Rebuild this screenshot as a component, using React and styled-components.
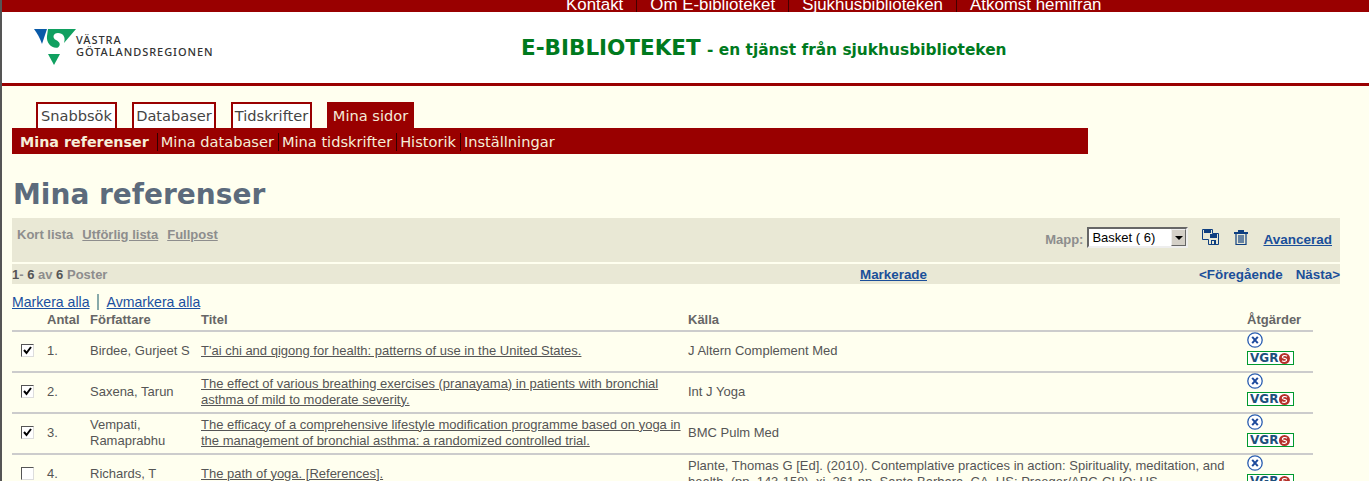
import React from "react";
import styled, { createGlobalStyle } from "styled-components";

const Global = createGlobalStyle`
  html, body { margin: 0; padding: 0; height: 481px; overflow: hidden; background: #ffffef; }
  body { font-family: "Liberation Sans", Arial, sans-serif; font-size: 13px; color: #555; }
`;

const Page = styled.div`
  border-left: 2px solid #555;
  height: 481px;
  overflow: hidden;
  box-sizing: border-box;
`;

const TopBar = styled.div`
  height: 12px;
  background: #990000;
  display: flex;
  justify-content: flex-start;
  align-items: flex-end;
  overflow: hidden;
  padding-left: 551px;
`;
const TopLink = styled.a`
  color: #fff;
  font-size: 16.9px;
  line-height: 16px;
  padding: 0 13px;
  margin-bottom: -1px;
  border-left: 1px solid #400;
  white-space: nowrap;
  &:first-child { border-left: 0; }
`;

const Header = styled.header`
  background: #fff;
  height: 71px;
  border-bottom: 3px solid #990000;
  display: flex;
  position: relative;
`;
const LogoWrap = styled.div`
  width: 519px;
  padding: 17px 0 0 31px;
  box-sizing: border-box;
  display: flex;
  align-items: flex-start;
`;
const LogoText = styled.div`
  font-family: "Noto Sans", sans-serif;
  font-size: 11px;
  line-height: 12px;
  font-weight: 500;
  color: #333;
  margin: 5px 0 0 0;
  letter-spacing: 0.95px;
  white-space: nowrap;
`;
const SiteTitle = styled.div`
  font-family: "DejaVu Sans", Verdana, sans-serif;
  color: #007a1e;
  font-size: 15.4px;
  font-weight: 700;
  padding-top: 23px;
  white-space: nowrap;
  b { font-size: 21.5px; margin-right: 1px; }
`;

const Main = styled.main`
  padding: 16px 0 0 10px;
`;
const Tabs = styled.div`
  display: flex;
  gap: 15px;
  padding-left: 24px;
  height: 26px;
`;
const Tab = styled.a`
  font-family: "DejaVu Sans", Verdana, sans-serif;
  font-size: 14.6px;
  line-height: 24px;
  box-sizing: border-box;
  width: ${p => p.$w}px;
  height: 26px;
  text-align: center;
  white-space: nowrap;
  border: 2px solid #990000;
  border-bottom: 0;
  background: ${p => (p.$active ? "#990000" : "#fff")};
  color: ${p => (p.$active ? "#f4ead8" : "#444")};
`;
const SubNav = styled.nav`
  width: 1076px;
  height: 26px;
  background: #990000;
  display: flex;
  align-items: center;
`;
const SubLink = styled.a`
  font-family: "DejaVu Sans", Verdana, sans-serif;
  font-size: 14.6px;
  color: #f6efd9;
  line-height: 18px;
  margin-top: 1px;
  padding: 0 4px 0 3px;
  border-left: 1px solid #300;
  white-space: nowrap;
  &:first-child { border-left: 0; padding: 0 8px; font-weight: 700; font-size: 14.3px; }
`;

const Title = styled.h1`
  font-family: "DejaVu Sans", Verdana, sans-serif;
  font-size: 28px;
  line-height: 32px;
  font-weight: 700;
  color: #5c6b7c;
  margin: 25px 0 7px 1px;
`;

const Toolbar = styled.div`
  width: 1328px;
  height: 44px;
  background: #e9e8d5;
  box-sizing: border-box;
  padding: 9px 8px 0 5px;
  display: flex;
  justify-content: space-between;
  font-weight: 700;
  color: #8d8d8d;
`;
const ViewLinks = styled.div`
  display: flex;
  gap: 9px;
  line-height: 15px;
  a { text-decoration: underline; }
`;
const Tools = styled.div`
  display: flex;
  align-items: flex-start;
`;
const MappLabel = styled.span`
  margin: 5px 4px 0 0;
`;
const FakeSelect = styled.div`
  width: 101px;
  height: 21px;
  box-sizing: border-box;
  border: 2px solid;
  border-color: #666 #eee #eee #666;
  background: #fff;
  font-weight: 400;
  font-size: 13px;
  color: #000;
  padding: 1px 0 0 3px;
  position: relative;
  margin-right: 14px;
`;
const SelectArrow = styled.i`
  position: absolute;
  right: 0;
  top: 0;
  width: 15px;
  height: 17px;
  background: #d4d0c8;
  box-sizing: border-box;
  border: 1px solid #666;
  border-top-color: #eee;
  border-left-color: #eee;
  &::after {
    content: "";
    position: absolute;
    left: 3px;
    top: 6px;
    border: 4px solid transparent;
    border-top: 4px solid #000;
    border-bottom: 0;
  }
`;
const ToolIcon = styled.svg`
  width: ${p => p.$w}px;
  height: 16px;
  margin: 2px ${p => p.$gap}px 0 0;
  flex: none;
`;
const AdvLink = styled.a`
  color: #1b4f99;
  text-decoration: underline;
  font-size: 13.5px;
  margin-top: 5px;
`;

const PageRow = styled.div`
  width: 1328px;
  height: 20px;
  margin-top: 2px;
  background: #e9e8d5;
  display: grid;
  grid-template-columns: 848px 1fr auto;
  align-items: center;
  font-weight: 700;
  color: #8d8d8d;
`;
const BlueBold = styled.a`
  color: #1b4f99;
  font-size: 13.4px;
  text-decoration: ${p => (p.$line ? "underline" : "none")};
  margin-left: ${p => p.$ml || 0}px;
`;
const Dark = styled.span`
  color: #555;
`;

const SelectRow = styled.div`
  margin-top: 10px;
  height: 16px;
  font-size: 14.1px;
  line-height: 16px;
  display: flex;
  a { color: #1a4fa0; text-decoration: underline; }
  i { width: 2px; background: #8aa; margin: 0 8px 0 7px; height: 16px; }
`;

const Table = styled.table`
  width: 1301px;
  border-collapse: collapse;
  table-layout: fixed;
  margin-top: 1px;
  color: #555;
  th {
    text-align: left;
    font-size: 13px;
    height: 20px;
    padding: 0 0 3px 0;
    box-sizing: border-box;
    color: #666;
    border-bottom: 2px solid #ccc;
  }
  td {
    padding: 0 0 2px 0;
    box-sizing: border-box;
    height: 41px;
    line-height: 16px;
    vertical-align: middle;
    border-bottom: 2px solid #ccc;
  }
`;
const Check = styled.span`
  display: block;
  width: 11px;
  height: 11px;
  margin-left: 9px;
  border: 1px solid;
  border-color: #555 #ddd #ddd #555;
  background: #fff;
  color: #000;
  svg { display: block; }
`;
const TitleLink = styled.a`
  color: #555;
  text-decoration: underline;
`;
const Actions = styled.div`
  display: flex;
  flex-direction: column;
  align-items: flex-start;
  gap: 3px;
  height: 37px;
`;
const VgrBadge = styled.div`
  width: 47px;
  height: 14px;
  box-sizing: border-box;
  border: 1px solid #009a2e;
  background: #fff;
  color: #1d4f7c;
  font-family: "DejaVu Sans", sans-serif;
  font-weight: 700;
  font-size: 12px;
  line-height: 12px;
  padding-left: 2px;
  display: flex;
  align-items: center;
  gap: 1px;
`;

function Logo() {
  return (
    <svg width="43" height="37" viewBox="0 0 43 37">
      <path d="M1 0H14L9 15C7 9 4 4 1 0Z" fill="#0a5aa8" />
      <path d="M15 0H43L31 14C33 8 30 4 25 4C20 4 19 9 23 11C27 13 28 16 25 18.5C19 20 13 14 14 7Z" fill="#10a060" />
      <path d="M15 25H27L21 36Z" fill="#10a060" />
    </svg>
  );
}

function XIcon() {
  return (
    <svg width="16" height="16" viewBox="0 0 16 16">
      <circle cx="8" cy="8" r="7.2" fill="#fff" stroke="#2a5db0" strokeWidth="1.3" />
      <path d="M5.2 4.8L10.8 11.2M10.8 4.8L5.2 11.2" stroke="#1d4a9c" strokeWidth="2" />
    </svg>
  );
}

function SfxIcon() {
  return (
    <svg width="11" height="11" viewBox="0 0 11 11">
      <circle cx="5.5" cy="5.5" r="5.5" fill="#b5302a" />
      <path d="M8 3.2C6 1.8 3 2.8 3.4 4.4C3.8 5.8 7.4 5 7.6 6.6C7.8 8.2 5 9 3 7.8" fill="none" stroke="#fff" strokeWidth="1.2" />
    </svg>
  );
}

function Vgr() {
  return (
    <Actions>
      <XIcon />
      <VgrBadge>VGR<SfxIcon /></VgrBadge>
    </Actions>
  );
}

function Box({ on }) {
  return (
    <Check>
      {on && (
        <svg width="11" height="11" viewBox="0 0 11 11">
          <path d="M2 5L4.5 8L9 2" fill="none" stroke="#000" strokeWidth="2" />
        </svg>
      )}
    </Check>
  );
}

const rows = [
  {
    on: true,
    n: "1.",
    author: "Birdee, Gurjeet S",
    title: "T'ai chi and qigong for health: patterns of use in the United States.",
    source: "J Altern Complement Med",
  },
  {
    on: true,
    n: "2.",
    author: "Saxena, Tarun",
    title: "The effect of various breathing exercises (pranayama) in patients with bronchial asthma of mild to moderate severity.",
    source: "Int J Yoga",
  },
  {
    on: true,
    n: "3.",
    author: "Vempati, Ramaprabhu",
    title: "The efficacy of a comprehensive lifestyle modification programme based on yoga in the management of bronchial asthma: a randomized controlled trial.",
    source: "BMC Pulm Med",
  },
  {
    on: false,
    n: "4.",
    author: "Richards, T",
    title: "The path of yoga. [References].",
    source: "Plante, Thomas G [Ed]. (2010). Contemplative practices in action: Spirituality, meditation, and health. (pp. 143-158). xi, 261 pp. Santa Barbara, CA, US: Praeger/ABC-CLIO; US.",
  },
];

export default function App() {
  return (
    <Page>
      <Global />
      <TopBar>
        <TopLink>Kontakt</TopLink>
        <TopLink>Om E-biblioteket</TopLink>
        <TopLink>Sjukhusbiblioteken</TopLink>
        <TopLink>Åtkomst hemifrån</TopLink>
      </TopBar>
      <Header>
        <LogoWrap>
          <Logo />
          <LogoText>VÄSTRA<br />GÖTALANDSREGIONEN</LogoText>
        </LogoWrap>
        <SiteTitle><b>E-BIBLIOTEKET</b> - en tjänst från sjukhusbiblioteken</SiteTitle>
      </Header>
      <Main>
        <Tabs>
          <Tab $w={81}>Snabbsök</Tab>
          <Tab $w={84}>Databaser</Tab>
          <Tab $w={81}>Tidskrifter</Tab>
          <Tab $w={87} $active>Mina sidor</Tab>
        </Tabs>
        <SubNav>
          <SubLink>Mina referenser</SubLink>
          <SubLink>Mina databaser</SubLink>
          <SubLink>Mina tidskrifter</SubLink>
          <SubLink>Historik</SubLink>
          <SubLink>Inställningar</SubLink>
        </SubNav>
        <Title>Mina referenser</Title>
        <Toolbar>
          <ViewLinks>
            <span>Kort lista</span>
            <a>Utförlig lista</a>
            <a>Fullpost</a>
          </ViewLinks>
          <Tools>
            <MappLabel>Mapp:</MappLabel>
            <FakeSelect>Basket ( 6)<SelectArrow /></FakeSelect>
            <ToolIcon $w={17} $gap={15} viewBox="0 0 17 16">
              <path d="M0.5 0.5H10.5V4.5H16.5V15.5H6.5V10.5H0.5Z" fill="#e9e8d5" stroke="#0f3f80" />
              <path d="M2 1H9V4H2ZM8 5H15V9H8ZM9 11H14V15H9Z" fill="#0f3f80" />
              <path d="M10 12H12V15H10Z" fill="#e9e8d5" />
            </ToolIcon>
            <ToolIcon $w={14} $gap={15} viewBox="0 0 14 16">
              <path d="M0 3H14V5H0ZM4 1H10V3H4Z" fill="#0f3f80" />
              <path d="M2 5V15.5H12V5M5 6V14M7 6V14M9 6V14" fill="none" stroke="#0f3f80" strokeWidth="1.2" />
            </ToolIcon>
            <AdvLink>Avancerad</AdvLink>
          </Tools>
        </Toolbar>
        <PageRow>
          <span><Dark>1</Dark>- <Dark>6</Dark> av <Dark>6</Dark> Poster</span>
          <span><BlueBold $line>Markerade</BlueBold></span>
          <span><BlueBold>&lt;Föregående</BlueBold><BlueBold $ml={13}>Nästa&gt;</BlueBold></span>
        </PageRow>
        <SelectRow>
          <a>Markera alla</a><i />
          <a>Avmarkera alla</a>
        </SelectRow>
        <Table>
          <colgroup>
            <col width="35" />
            <col width="43" />
            <col width="111" />
            <col width="487" />
            <col width="559" />
            <col width="66" />
          </colgroup>
          <thead>
            <tr>
              <th />
              <th>Antal</th>
              <th>Författare</th>
              <th>Titel</th>
              <th>Källa</th>
              <th>Åtgärder</th>
            </tr>
          </thead>
          <tbody>
            {rows.map(r => (
              <tr key={r.n}>
                <td><Box on={r.on} /></td>
                <td>{r.n}</td>
                <td>{r.author}</td>
                <td><TitleLink>{r.title}</TitleLink></td>
                <td>{r.source}</td>
                <td><Vgr /></td>
              </tr>
            ))}
          </tbody>
        </Table>
      </Main>
    </Page>
  );
}
